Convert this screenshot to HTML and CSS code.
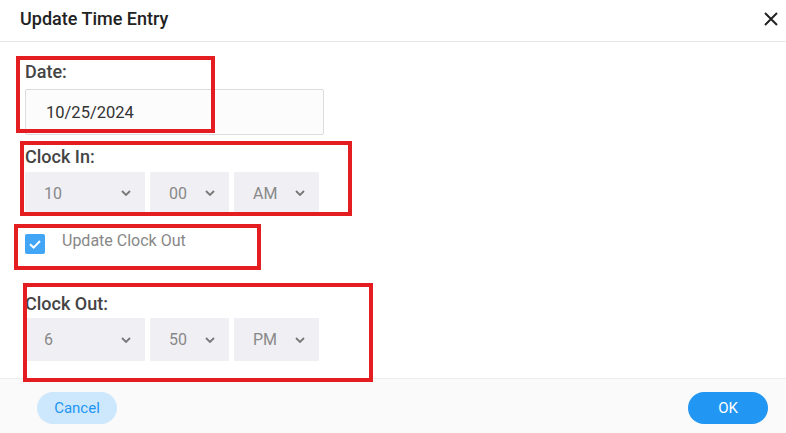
FILE: index.html
```html
<!DOCTYPE html>
<html>
<head>
<meta charset="utf-8">
<link rel="stylesheet" href="styles.css">
</head>
<body>
<div class="dialog">
  <div class="header">
    <div class="title">Update Time Entry</div>
    <svg class="close" width="14" height="14" viewBox="0 0 14 14"><path d="M1 1L13 13M13 1L1 13" stroke="#222" stroke-width="2" fill="none"/></svg>
  </div>
  <div class="main">
    <div class="label first">Date:</div>
    <div class="input">10/25/2024</div>

    <div class="label mid">Clock In:</div>
    <div class="selects">
      <div class="sel w1"><span>10</span><svg width="10" height="6" viewBox="0 0 10 6"><path d="M1 1L5 5L9 1" stroke="#777" stroke-width="1.8" fill="none"/></svg></div>
      <div class="sel w2"><span>00</span><svg width="10" height="6" viewBox="0 0 10 6"><path d="M1 1L5 5L9 1" stroke="#777" stroke-width="1.8" fill="none"/></svg></div>
      <div class="sel w3"><span>AM</span><svg width="10" height="6" viewBox="0 0 10 6"><path d="M1 1L5 5L9 1" stroke="#777" stroke-width="1.8" fill="none"/></svg></div>
    </div>

    <div class="check-row">
      <div class="checkbox"><svg width="20" height="20" viewBox="0 0 20 20"><path d="M5 10.2L8.6 13.6L15 7" stroke="#fff" stroke-width="2" fill="none"/></svg></div>
      <span class="check-label">Update Clock Out</span>
    </div>

    <div class="label out">Clock Out:</div>
    <div class="selects">
      <div class="sel w1 tall"><span>6</span><svg width="10" height="6" viewBox="0 0 10 6"><path d="M1 1L5 5L9 1" stroke="#777" stroke-width="1.8" fill="none"/></svg></div>
      <div class="sel w2 tall"><span>50</span><svg width="10" height="6" viewBox="0 0 10 6"><path d="M1 1L5 5L9 1" stroke="#777" stroke-width="1.8" fill="none"/></svg></div>
      <div class="sel w3 tall"><span>PM</span><svg width="10" height="6" viewBox="0 0 10 6"><path d="M1 1L5 5L9 1" stroke="#777" stroke-width="1.8" fill="none"/></svg></div>
    </div>
  </div>
  <div class="footer">
    <div class="btn cancel">Cancel</div>
    <div class="btn ok">OK</div>
  </div>

  <div class="mark m1"></div>
  <div class="mark m2"></div>
  <div class="mark m3"></div>
  <div class="mark m4"></div>
</div>
</body>
</html>
```
FILE: styles.css
```css
* { box-sizing: border-box; }
html, body { margin: 0; padding: 0; }
body {
  font-family: Roboto, "Liberation Sans", sans-serif;
  background: #fff;
}
.dialog {
  position: relative;
  width: 786px;
  height: 433px;
  display: flex;
  flex-direction: column;
  overflow: hidden;
}
.header {
  height: 42px;
  border-bottom: 1px solid #e6e6e6;
  display: flex;
  align-items: flex-start;
  justify-content: space-between;
  padding: 0 8px 0 20px;
}
.title {
  font-size: 18px;
  font-weight: 500;
  color: #222;
  line-height: 21px;
  margin-top: 8px;
}
.close { margin-top: 12px; }
.main {
  flex: 1;
  padding: 19px 0 0 25px;
}
.label {
  font-size: 18px;
  font-weight: 500;
  color: #444;
  line-height: 21px;
}
.label.first { margin-bottom: 7px; }
.label.mid { margin-top: 11px; margin-bottom: 5px; }
.label.out { margin-top: 39px; margin-bottom: 4px; }
.input {
  width: 299px;
  height: 46px;
  background: #fcfcfc;
  border: 1px solid #dcdcdc;
  border-radius: 2px;
  padding-left: 20px;
  font-size: 16.5px;
  color: #333;
  display: flex;
  align-items: center;
}
.selects {
  display: flex;
  gap: 5px;
}
.sel {
  height: 42px;
  background: #f0f0f4;
  display: flex;
  align-items: center;
  justify-content: space-between;
  padding: 0 14px 0 19px;
  font-size: 16px;
  color: #888;
}
.sel.tall { height: 43px; }
.sel.w1 { width: 120px; }
.sel.w2 { width: 79px; }
.sel.w3 { width: 85px; }
.check-row {
  margin-top: 20px;
  display: flex;
  align-items: flex-start;
  height: 20px;
}
.checkbox {
  width: 20px;
  height: 20px;
  background: #42a5f5;
  border-radius: 2px;
}
.checkbox svg { display: block; }
.check-label {
  margin-left: 17px;
  margin-top: -3px;
  font-size: 16px;
  line-height: 20px;
  color: #888;
}
.footer {
  height: 55px;
  border-top: 1px solid #ececec;
  background: #fafafa;
  display: flex;
  justify-content: space-between;
  align-items: flex-start;
  padding: 13px 18px 0 37px;
}
.btn {
  width: 80px;
  height: 32px;
  border-radius: 16px;
  display: flex;
  align-items: center;
  justify-content: center;
  font-size: 15px;
}
.cancel { background: #cde7fd; color: #2196f3; }
.ok { background: #2196f3; color: #fff; }
.mark {
  position: absolute;
  border: 4px solid #e41e20;
}
.m1 { left: 16px; top: 56px; width: 199px; height: 77px; }
.m2 { left: 20px; top: 141px; width: 332px; height: 75px; }
.m3 { left: 14px; top: 224px; width: 247px; height: 46px; }
.m4 { left: 23px; top: 283px; width: 350px; height: 99px; }
```
